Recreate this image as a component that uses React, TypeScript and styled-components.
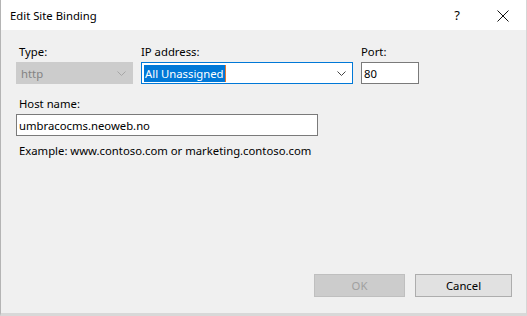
import React from 'react'
import styled, { createGlobalStyle } from 'styled-components'

const GlobalStyle = createGlobalStyle`
  html, body {
    margin: 0;
    padding: 0;
    background: #f0f0f0;
  }
  * {
    box-sizing: border-box;
  }
`

const Chevron = ({ color }: { color: string }) => (
  <svg width="9" height="5" viewBox="0 0 9 5">
    <path d="M0.5 0.5 L4.5 4.5 L8.5 0.5" fill="none" stroke={color} strokeWidth="1" />
  </svg>
)

const App = () => {
  return (
    <>
      <GlobalStyle />
      <Dialog>
        <TitleBar>
          <Title>Edit Site Binding</Title>
          <TitleActions>
            <HelpGlyph>?</HelpGlyph>
            <CloseGlyph>
              <svg width="12" height="12" viewBox="0 0 12 12">
                <path d="M0.5 0.5 L11.5 11.5 M11.5 0.5 L0.5 11.5" stroke="#111" strokeWidth="1" />
              </svg>
            </CloseGlyph>
          </TitleActions>
        </TitleBar>
        <Body>
          <TopRow>
            <Field>
              <Label $indent={3}>Type:</Label>
              <Combo $disabled>
                <ComboText $disabled>http</ComboText>
                <Chevron color="#a6a6a6" />
              </Combo>
            </Field>
            <Field>
              <Label>IP address:</Label>
              <Combo $focused>
                <Selected>All Unassigned</Selected>
                <Caret />
                <Spacer />
                <Chevron color="#444" />
              </Combo>
            </Field>
            <Field>
              <Label>Port:</Label>
              <TextBox $width={58}>80</TextBox>
            </Field>
          </TopRow>
          <HostBlock>
            <Label $indent={3}>Host name:</Label>
            <TextBox $width={302}>umbracocms.neoweb.no</TextBox>
            <Hint>Example: www.contoso.com or marketing.contoso.com</Hint>
          </HostBlock>
          <Footer>
            <Button $width={91} disabled>
              OK
            </Button>
            <Button $width={97}>Cancel</Button>
          </Footer>
        </Body>
      </Dialog>
    </>
  )
}

export default App

const Dialog = styled.div`
  width: 527px;
  height: 316px;
  display: flex;
  flex-direction: column;
  border-left: 1px solid #b4b4b4;
  border-right: 1px solid #d6d6d6;
  border-bottom: 3px solid #d8d8d8;
  background: #f0f0f0;
  font-family: 'Noto Sans', 'Segoe UI', sans-serif;
  font-size: 11.3px;
  color: #000;
`

const TitleBar = styled.div`
  height: 30px;
  display: flex;
  align-items: center;
  justify-content: space-between;
  background: #fff;
  padding-left: 9px;
`

const Title = styled.span`
  color: #000;
`

const TitleActions = styled.div`
  display: flex;
  align-items: center;
  height: 100%;
`

const HelpGlyph = styled.span`
  width: 46px;
  text-align: center;
  font-size: 13px;
`

const CloseGlyph = styled.span`
  width: 46px;
  display: flex;
  align-items: center;
  justify-content: center;
  padding-top: 1px;
`

const Body = styled.div`
  flex: 1;
  display: flex;
  flex-direction: column;
  padding: 14px 14px 0 15px;
`

const TopRow = styled.div`
  display: flex;
  gap: 8px;
`

const Field = styled.div`
  display: flex;
  flex-direction: column;
  gap: 2px;
`

const Label = styled.span<{ $indent?: number }>`
  line-height: 16px;
  padding-left: ${(p) => p.$indent ?? 0}px;
`

const Combo = styled.div<{ $disabled?: boolean; $focused?: boolean }>`
  height: 22px;
  width: ${(p) => (p.$disabled ? 117 : 212)}px;
  display: flex;
  align-items: center;
  justify-content: space-between;
  padding: 0 6px 0 2px;
  background: ${(p) => (p.$disabled ? '#cccccc' : '#fff')};
  border: 1px solid ${(p) => (p.$disabled ? '#cccccc' : p.$focused ? '#0078d7' : '#7a7a7a')};
`

const ComboText = styled.span<{ $disabled?: boolean }>`
  padding-left: 2px;
  color: ${(p) => (p.$disabled ? '#838383' : '#000')};
`

const Selected = styled.span`
  background: #0078d7;
  color: #fff;
  line-height: 17px;
  padding: 0 1px;
`

const Caret = styled.span`
  width: 1px;
  height: 17px;
  background: #e8772e;
`

const Spacer = styled.span`
  flex: 1;
`

const TextBox = styled.div<{ $width: number }>`
  width: ${(p) => p.$width}px;
  height: 22px;
  display: flex;
  align-items: center;
  padding-left: 2px;
  background: #fff;
  border: 1px solid #7a7a7a;
`

const HostBlock = styled.div`
  display: flex;
  flex-direction: column;
  gap: 2px;
  margin-top: 12px;
`

const Hint = styled.span`
  line-height: 16px;
  margin-top: 5px;
  padding-left: 3px;
`

const Footer = styled.div`
  margin-top: auto;
  margin-bottom: 16px;
  display: flex;
  justify-content: flex-end;
  gap: 10px;
`

const Button = styled.button<{ $width: number }>`
  width: ${(p) => p.$width}px;
  height: 23px;
  font-family: inherit;
  font-size: 11.3px;
  padding: 0;
  color: ${(p) => (p.disabled ? '#a0a0a0' : '#000')};
  background: ${(p) => (p.disabled ? '#cccccc' : '#e1e1e1')};
  border: 1px solid ${(p) => (p.disabled ? '#bfbfbf' : '#adadad')};
  border-radius: 0;
`
